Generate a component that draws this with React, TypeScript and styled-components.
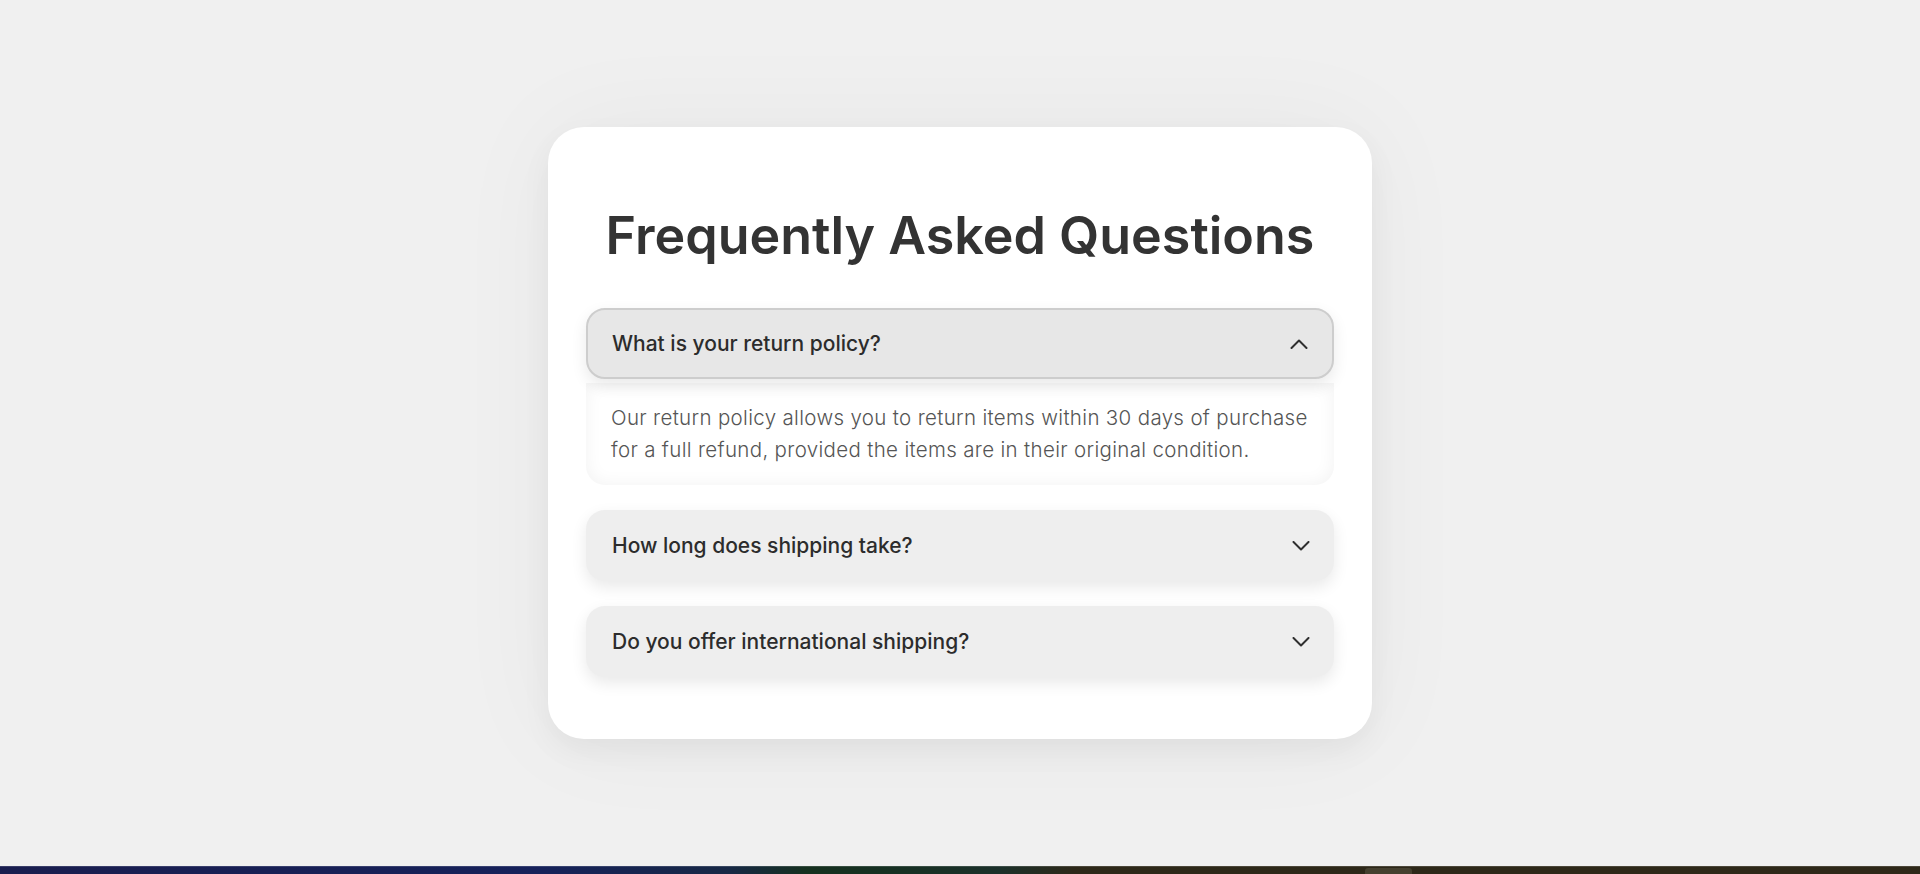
import React, { useState } from "react";
import styled, { createGlobalStyle } from "styled-components";

const GlobalStyle = createGlobalStyle`
  html, body {
    margin: 0;
    padding: 0;
    height: 100%;
    background: #f0f0f0;
    font-family: "Inter", "Open Sans", "DejaVu Sans", sans-serif;
  }
  * { box-sizing: border-box; }
`;

const Page = styled.div`
  height: 100vh;
  display: flex;
  flex-direction: column;
  background: #f0f0f0;
`;

const Main = styled.main`
  flex: 1;
  display: flex;
  align-items: center;
  justify-content: center;
`;

const Card = styled.section`
  width: 824px;
  background: #ffffff;
  border-radius: 36px;
  padding: 40px 38px 62px;
  box-shadow: 0 12px 30px rgba(0, 0, 0, 0.05), 0 0 110px rgba(0, 0, 0, 0.045);
`;

const Title = styled.h1`
  margin: 38px 0 41px;
  text-align: center;
  font-size: 52px;
  line-height: 62px;
  font-weight: 600;
  color: #333333;
  letter-spacing: 0;
`;

const List = styled.div`
  display: flex;
  flex-direction: column;
  gap: 25px;
`;

const Item = styled.div`
  display: flex;
  flex-direction: column;
`;

const Header = styled.button<{ $open: boolean }>`
  display: flex;
  align-items: center;
  justify-content: space-between;
  width: 100%;
  height: 71px;
  padding: 0 24px 0 ${(p) => (p.$open ? "24px" : "26px")};
  border: ${(p) => (p.$open ? "2px solid #cdcdcd" : "none")};
  border-radius: 19px;
  background: ${(p) => (p.$open ? "#e7e7e7" : "#eeeeee")};
  box-shadow: 0 6px 16px rgba(0, 0, 0, 0.09);
  cursor: pointer;
  font-family: inherit;
  text-align: left;
  position: relative;
  z-index: 1;
`;

const Question = styled.span`
  font-size: 21px;
  font-weight: 500;
  color: #2c2c2c;
`;

const Chevron = styled.svg`
  width: 18px;
  height: 10px;
  flex-shrink: 0;
`;

const Answer = styled.div`
  margin-top: 4px;
  padding: 19px 25px;
  background: #ffffff;
  border-radius: 0 0 19px 19px;
  box-shadow: inset 0 0 18px rgba(0, 0, 0, 0.055);
`;

const AnswerText = styled.p`
  margin: 0;
  font-size: 20.5px;
  line-height: 32px;
  font-weight: 300;
  letter-spacing: 0.33px;
  color: #555555;
`;

const Taskbar = styled.footer`
  height: 8px;
  flex-shrink: 0;
  display: flex;
  align-items: flex-end;
  padding-left: 1365px;
  border-top: 1px solid rgba(255, 255, 255, 0.14);
  background: linear-gradient(
    90deg,
    #191d4e 0%,
    #16215a 28%,
    #172845 38%,
    #15301f 42%,
    #163022 46%,
    #1b302a 52%,
    #2d2819 56%,
    #2e2819 100%
  );
`;

const TaskbarItem = styled.div`
  width: 47px;
  height: 6px;
  border-radius: 3px 3px 0 0;
  background: #45402f;
`;

const faqs = [
  { q: "What is your return policy?" },
  { q: "How long does shipping take?" },
  { q: "Do you offer international shipping?" },
];

const ChevronIcon = ({ up }: { up: boolean }) => (
  <Chevron viewBox="0 0 18 10" fill="none">
    <polyline
      points={up ? "1.5,9 9,1.5 16.5,9" : "1.5,1 9,8.5 16.5,1"}
      stroke="#2f2f2f"
      strokeWidth="2"
      strokeLinecap="round"
      strokeLinejoin="round"
    />
  </Chevron>
);

export default function App() {
  const [open, setOpen] = useState<number | null>(0);
  return (
    <Page>
      <GlobalStyle />
      <Main>
        <Card>
          <Title>Frequently Asked Questions</Title>
          <List>
            {faqs.map((f, i) => (
              <Item key={f.q}>
                <Header $open={open === i} onClick={() => setOpen(open === i ? null : i)}>
                  <Question>{f.q}</Question>
                  <ChevronIcon up={open === i} />
                </Header>
                {open === i && (
                  <Answer>
                    <AnswerText>
                      Our return policy allows you to return items within 30 days of purchase
                      <br />
                      for a full refund, provided the items are in their original condition.
                    </AnswerText>
                  </Answer>
                )}
              </Item>
            ))}
          </List>
        </Card>
      </Main>
      <Taskbar>
        <TaskbarItem />
      </Taskbar>
    </Page>
  );
}
